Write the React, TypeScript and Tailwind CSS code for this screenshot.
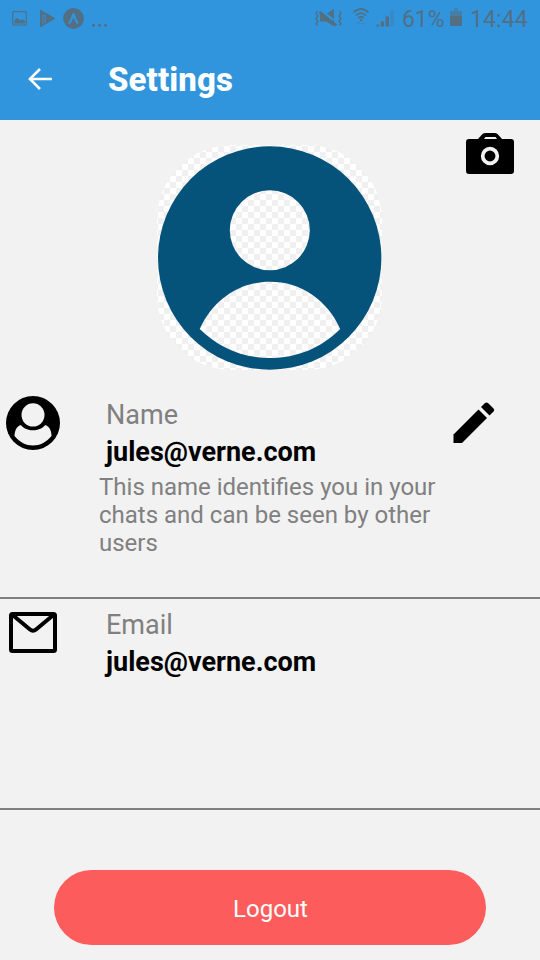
import type { ReactNode } from 'react';

function StatusBar() {
  return (
    <div className="flex h-9 items-center text-[#526f84]">
      <svg className="block" width="110" height="36" viewBox="0 0 110 36" fill="currentColor" role="img">
        <rect x="12.7" y="11.7" width="13.6" height="13.3" rx="1" fill="none" stroke="currentColor" strokeWidth="1.200" />
        <path d="M14.500 23.500V20l3-2 3 2.500 2-1.200 2.500 2V23.500z" />
        <path d="M40 9.500l15.500 9L40 27.500z" />
        <path d="M43 24V15h2.200v8" fill="none" stroke="#3095dd" strokeWidth="0.800" />
        <circle cx="73.500" cy="18.500" r="10.400" />
        <path d="M69.500 22.800c1.800-2 2.700-5.700 4-8.600 1.300 2.900 2.200 6.600 4 8.600" fill="none" stroke="#3095dd" strokeWidth="2.200" strokeLinecap="round" strokeLinejoin="round" />
        <circle cx="93.500" cy="25.200" r="1.500" /><circle cx="99.500" cy="25.200" r="1.500" /><circle cx="105.500" cy="25.200" r="1.500" />
      </svg>
      <svg className="ml-[200px] block" width="90" height="36" viewBox="310 0 90 36" fill="currentColor" role="img">
        <path d="M320 14h2.500l9 7.500H320zM327 13.500l7-4.500v10z" />
        <path d="M319.500 12L336.500 25.500" stroke="currentColor" strokeWidth="2.600" />
        <path d="M324 20l10 6.500V20z" />
        <path d="M317.500 11l-1.500 2.500 2 2.500-2 2.500 2 2.500-2 2.500 1.500 2M339.500 11l1.500 2.500-2 2.500 2 2.500-2 2.500 2 2.500-1.500 2" fill="none" stroke="currentColor" strokeWidth="1.400" />
        <path d="M353.500 12.500Q361 5.500 368.500 12.500M356 15.300q5-4.500 10 0M358.300 18q2.700-2.300 5.400 0" fill="none" stroke="currentColor" strokeWidth="1.700" />
        <circle cx="361" cy="20" r="1.200" />
        <path d="M356.500 23.500l2-2 2 2zM361.500 23h4l-2 2z" opacity="0.500" />
        <path d="M376.500 24.500h2.500v2h-2.500zM380.700 21.500h3.300v5h-3.300zM385.500 16.500h3.500v10h-3.500z" />
        <path d="M390.500 10.500h3.200v16h-3.200z" opacity="0.350" />
      </svg>
      <span className="ml-[2px] w-[48px] whitespace-nowrap pt-[3px] text-[23px] leading-9 tracking-[-0.1px]">61%</span>
      <svg className="block" width="14" height="36" viewBox="0 0 14 36" fill="currentColor" role="img">
        <path d="M4 8h4v3H4z" opacity="0.500" /><path d="M0 11h12v5H0z" opacity="0.600" /><path d="M0 16h12v10H0z" />
      </svg>
      <span className="ml-[6px] whitespace-nowrap pt-[3px] text-[23px] leading-9 tracking-[0.1px]">14:44</span>
    </div>
  );
}

function Header() {
  return (
    <header className="h-[120px] bg-[#3095dd]">
      <StatusBar />
      <div className="flex h-[84px] items-center pl-6 pt-[3px]">
        <svg className="mb-px block" width="32" height="32" viewBox="0 0 24 24" fill="#fff" role="img">
          <path d="M20.900 11.100H6.800l5.900-5.900-1.400-1.400L3.100 12l8.200 8.200 1.400-1.400-5.900-5.900h14.100z" />
        </svg>
        <h1 className="ml-[52px] text-[33px] font-extrabold leading-10 tracking-[0.1px] text-white">Settings</h1>
      </div>
    </header>
  );
}

function Avatar() {
  return (
    <svg className="block h-[225px] w-[225px] rounded-[75px]" viewBox="157 145 225 225" role="img">
      <defs>
        <pattern id="checker" x="158" y="146" width="12" height="12" patternUnits="userSpaceOnUse">
          <path d="M0 0h12v12H0z" fill="#fff" />
          <path d="M0 0h6v6H0zM6 6h6v6H6z" fill="#f0f0f0" />
        </pattern>
      </defs>
      <path d="M157 145h225v225H157z" fill="url(#checker)" />
      <circle cx="269.700" cy="258" r="111.700" fill="#05527b" />
      <circle cx="269.800" cy="230.200" r="40" fill="url(#checker)" />
      <path d="M199.700 329C213 300 239 281.800 270 281.800S327 300 340.200 329C321 348 297 358 270 358S219 348 199.700 329z" fill="url(#checker)" />
    </svg>
  );
}

function Field({ icon, label, value, note, action }: { icon: ReactNode; label: string; value: string; note?: string; action?: ReactNode }) {
  return (
    <section className="flex border-b-2 border-[#808080]">
      <div className="w-[99px] shrink-0">{icon}</div>
      <div className="h-[208px] w-[354px] pt-2">
        <div className="pl-[7px] text-[27px] leading-9 text-[#808080]">{label}</div>
        <div className="pl-[7px] text-[27px] font-bold leading-[38px] text-black">{value}</div>
        {note && <p className="mt-0.5 w-[345px] text-[24px] leading-7 text-[#808080]">{note}</p>}
      </div>
      {action}
    </section>
  );
}

export default function App() {
  return (
    <div className="flex h-[960px] w-[540px] flex-col overflow-hidden bg-[#f2f2f2] font-['Roboto',sans-serif]">
      <Header />
      <main>
        <div className="flex h-[269px] items-start pl-[157px] pt-[13px]">
          <div className="pt-3"><Avatar /></div>
          <svg className="ml-[84px] block" width="48" height="41" viewBox="0 0 48 41" role="img">
            <path d="M3 6H12L16 1.500Q17 0 19 0H29Q31 0 32 1.500L36 6H45Q48 6 48 9V38Q48 41 45 41H3Q0 41 0 38V9Q0 6 3 6Z" />
            <path d="M19.500 4H29.500L31 6H18Z" fill="#f2f2f2" />
            <circle cx="24" cy="23" r="7.300" fill="none" stroke="#f2f2f2" strokeWidth="3.700" />
          </svg>
        </div>
        <Field
          label="Name"
          value="jules@verne.com"
          note="This name identifies you in your chats and can be seen by other users"
          icon={
            <svg className="ml-1.5 mt-[7px] block" width="54" height="54" viewBox="0 0 54 54" role="img">
              <circle cx="27" cy="27" r="27" />
              <ellipse cx="27" cy="18.900" rx="11.500" ry="11.700" fill="#f2f2f2" />
              <path d="M14.500 29C18.500 33 22 34.200 27 34.200S35.500 33 39.500 29C43.500 30.500 45.500 35 45.500 40C40 46.500 34 49.500 27 49.500S14 46.500 8.500 40C8.500 35 10.500 30.500 14.500 29Z" fill="#f2f2f2" />
            </svg>
          }
          action={
            <svg className="mt-[13px] block" width="42" height="42" viewBox="0 0 42 42" role="img">
              <path d="M.5 32.500L25.500 7.500L34 16L9 41H.5Z" />
              <path d="M28 5L32 1Q33.500 0 35 1L40.500 6.500Q42 8 40.500 9.500L36.500 13.500Z" />
            </svg>
          }
        />
        <div className="flex flex-col">
          <Field
            label="Email"
            value="jules@verne.com"
            icon={
              <svg className="mb-[155px] ml-[9px] mt-[13px] block" width="48" height="41" viewBox="0 0 48 41" fill="none" stroke="#000" role="img">
                <rect x="2" y="2" width="44" height="37" rx="1.500" strokeWidth="4" />
                <path d="M3 2.500L21 17.500Q24 20 27 17.500L45 2.500" strokeWidth="4" />
              </svg>
            }
          />
        </div>
        <div className="flex justify-center pt-[60px]">
          <button className="h-[75px] w-[432px] rounded-[38px] bg-[#fd5c5c] pl-px pt-0.5 text-[24px] leading-8 text-white">Logout</button>
        </div>
      </main>
    </div>
  );
}
